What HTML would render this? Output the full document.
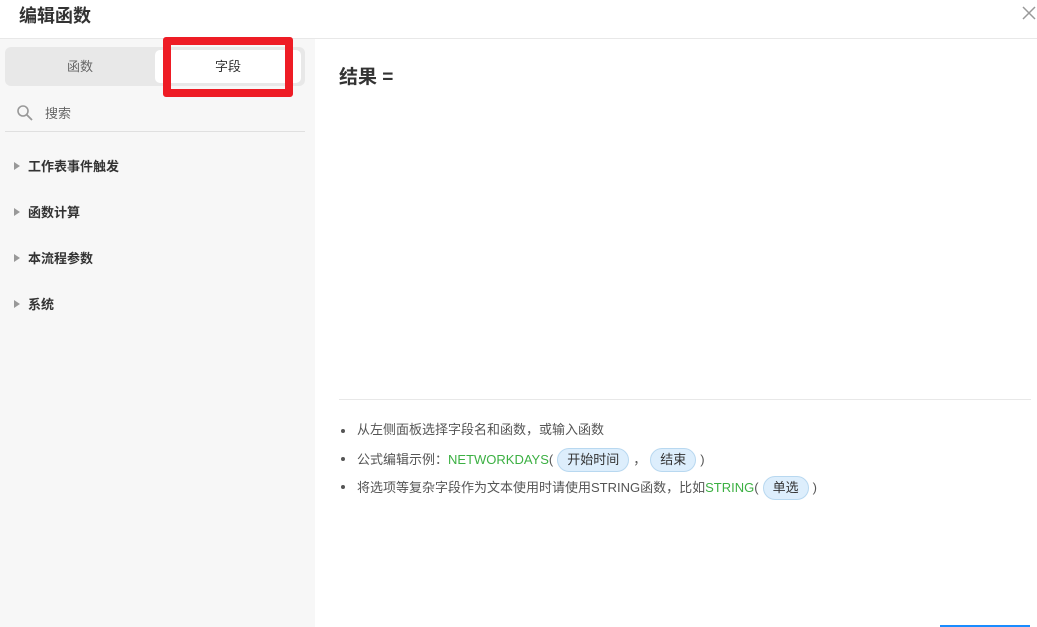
<!DOCTYPE html>
<html><head><meta charset="utf-8"><style>
*{margin:0;padding:0;box-sizing:border-box}
body{width:1037px;height:627px;overflow:hidden;background:#fff;font-family:"Liberation Sans","Noto Sans CJK SC",sans-serif;position:relative;color:#333}
.a{position:absolute}
.title{left:19px;top:2px;font-size:18px;font-weight:bold;color:#333}
.hdr{left:0;top:38px;width:1037px;height:1px;background:#e8e8e8}
.left{left:0;top:39px;width:315px;height:588px;background:#f7f7f7}
.tabs{left:5px;top:47px;width:300px;height:39px;background:#e8e8e8;border-radius:6px}
.t1{left:5px;top:47px;width:150px;height:39px;line-height:39px;text-align:center;font-size:13px;color:#666}
.t2{left:155px;top:50px;width:146px;height:33px;background:#fff;border-radius:5px;line-height:33px;text-align:center;font-size:13px;color:#333}
.red{left:163px;top:37px;width:130px;height:60px;border:8px solid #ee1c25;border-radius:3px}
.sep{left:5px;top:131px;width:300px;height:1px;background:#e0e0e0}
.item{left:14px;font-size:13px;font-weight:bold;color:#333}
.item i{display:inline-block;width:0;height:0;border-left:6px solid #999;border-top:4px solid transparent;border-bottom:4px solid transparent;margin-right:8px;vertical-align:1px}
.res{left:339px;top:62px;font-size:19px;font-weight:bold;color:#333}
.line{left:339px;top:399px;width:692px;height:1px;background:#e8e8e8}
ul{position:absolute;left:339px;top:420px;font-size:13px;color:#555;list-style:none}
li{height:28px;line-height:20px;position:relative;padding-left:18px}
li:before{content:"";position:absolute;left:2px;top:9px;width:4px;height:4px;border-radius:50%;background:#555}
.g{color:#3cb043}
.tag{display:inline-block;padding:0 9px;height:24px;line-height:22px;border:1px solid #b8d8f0;background:#ddeefc;border-radius:12px;color:#333;margin:0 4px}
.btn{left:940px;top:625px;width:90px;height:2px;background:#1a8cff}
</style></head><body>
<div class="a title">编辑函数</div>
<svg class="a" style="left:1022px;top:6px" width="14" height="14" viewBox="0 0 14 14"><path d="M1 1L13 13M13 1L1 13" stroke="#999" stroke-width="1.5"/></svg>
<div class="a hdr"></div>
<div class="a left"></div>
<div class="a tabs"></div>
<div class="a t1">函数</div>
<div class="a t2">字段</div>
<div class="a red"></div>
<svg class="a" style="left:16px;top:104px" width="18" height="18" viewBox="0 0 18 18"><circle cx="7" cy="7" r="5" fill="none" stroke="#999" stroke-width="1.6"/><path d="M11 11l5 5" stroke="#999" stroke-width="1.8"/></svg>
<div class="a" style="left:45px;top:103px;font-size:13px;color:#666">搜索</div>
<div class="a sep"></div>
<div class="a item" style="top:156px"><i></i>工作表事件触发</div>
<div class="a item" style="top:202px"><i></i>函数计算</div>
<div class="a item" style="top:248px"><i></i>本流程参数</div>
<div class="a item" style="top:294px"><i></i>系统</div>
<div class="a res">结果 =</div>
<div class="a line"></div>
<ul>
<li>从左侧面板选择字段名和函数，或输入函数</li>
<li>公式编辑示例：<span class="g">NETWORKDAYS</span>(<span class="tag">开始时间</span>，<span class="tag">结束</span>)</li>
<li>将选项等复杂字段作为文本使用时请使用STRING函数，比如<span class="g">STRING</span>(<span class="tag">单选</span>)</li>
</ul>
<div class="a btn"></div>
</body></html>
